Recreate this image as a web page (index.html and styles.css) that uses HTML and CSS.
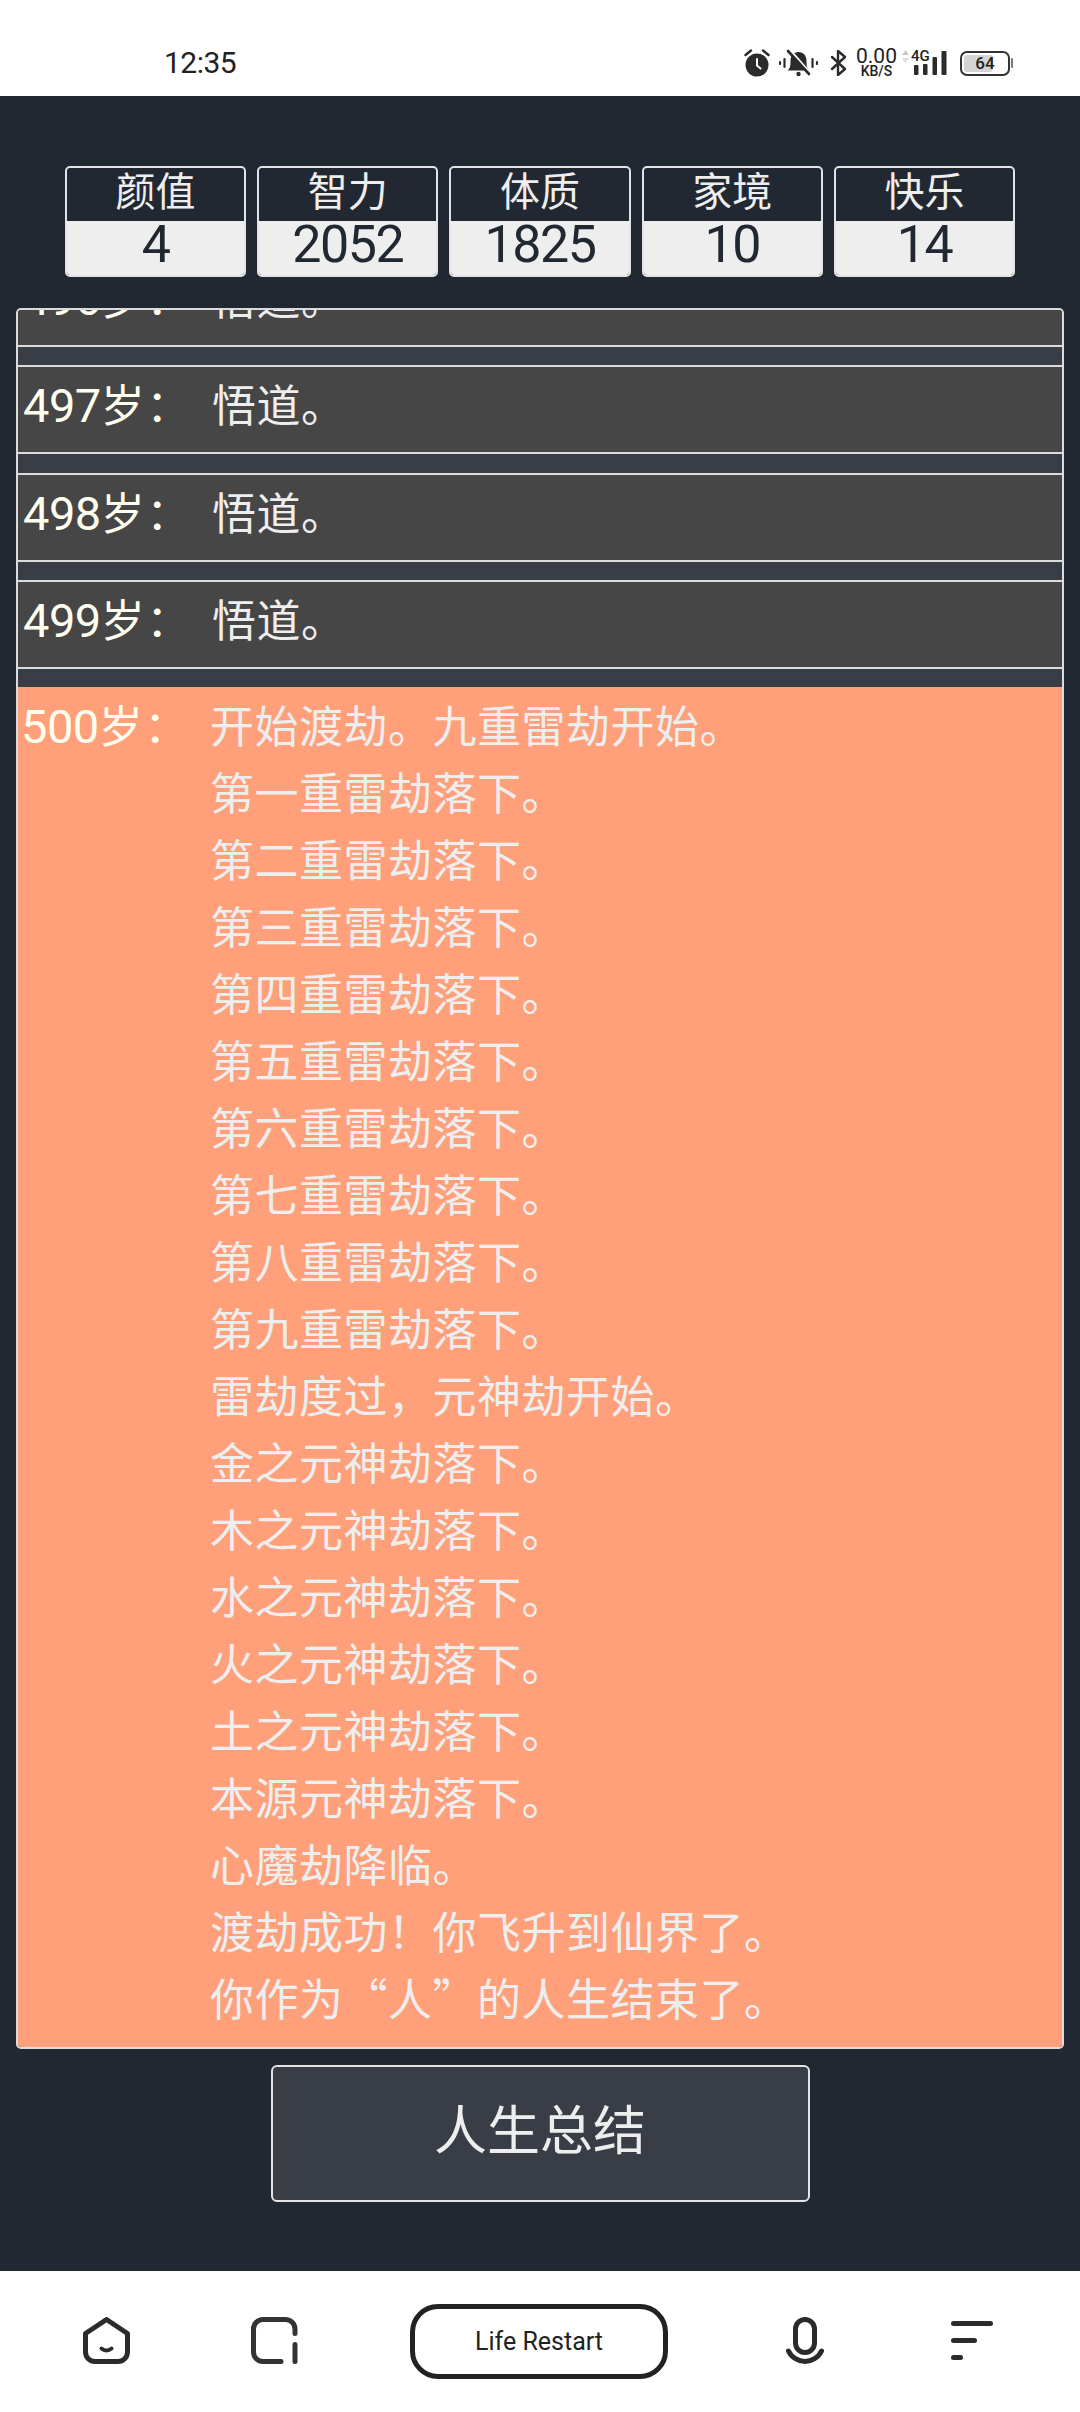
FILE: index.html
```html
<!DOCTYPE html>
<html lang="zh-CN">
<head>
    <meta charset="UTF-8">
    <meta name="viewport" content="width=device-width, initial-scale=1.0">
    <title>Life Restart</title>
    <link rel="stylesheet" href="styles.css">
</head>
<body>
    <header class="status-bar">
        <span class="clock">12:35</span>
        <div class="status-icons">
            <svg class="icon-alarm" width="26" height="28" viewBox="0 0 26 28">
                <circle cx="13" cy="16" r="11.5" fill="#2b2b2b"/>
                <path d="M13 10v6.5l3.5 3" fill="none" stroke="#fff" stroke-width="2" stroke-linecap="round"/>
                <path d="M1.5 6L7 1.5M24.5 6L19 1.5" fill="none" stroke="#2b2b2b" stroke-width="2.4" stroke-linecap="round"/>
            </svg>
            <svg class="icon-bell" width="39" height="28" viewBox="0 0 39 28">
                <path d="M8.500 21.500c2.500-2 3-4 3-9.500 0-5.500 3-9 8-9s8 3.500 8 9c0 5.500 .5 7.500 3 9.500z" fill="#2b2b2b"/>
                <circle cx="19.500" cy="25" r="2.200" fill="#2b2b2b"/>
                <path d="M11.500 2l20 23" stroke="#fff" stroke-width="3"/>
                <path d="M9 2l21 23" stroke="#2b2b2b" stroke-width="2.600" stroke-linecap="round"/>
                <path d="M1 13v2M5.500 10v8M33.500 10v8M38 13v2" stroke="#2b2b2b" stroke-width="2.200" stroke-linecap="round"/>
            </svg>
            <svg class="icon-bt" width="17" height="26" viewBox="0 0 17 26">
                <path d="M2 7l13 12-7 6V1l7 6L2 19" fill="none" stroke="#2b2b2b" stroke-width="2.400" stroke-linejoin="round" stroke-linecap="round"/>
            </svg>
            <div class="net-speed">
                <span class="net-num">0.00</span>
                <span class="net-unit">KB/S</span>
            </div>
            <svg class="icon-arrows" width="7" height="13" viewBox="0 0 7 13">
                <path d="M3.500 0L7 5H0z" fill="#c9c9c9"/>
                <path d="M3.500 13L7 8H0z" fill="#dedede"/>
            </svg>
            <div class="signal">
                <span class="signal-tag">4G</span>
                <svg width="34" height="25" viewBox="0 0 34 25">
                    <rect x="1" y="14" width="4.500" height="10" rx="1" fill="#2b2b2b"/>
                    <rect x="10" y="13" width="4.500" height="11" rx="1" fill="#2b2b2b"/>
                    <rect x="19.500" y="6" width="4.500" height="18" rx="1" fill="#2b2b2b"/>
                    <rect x="28.500" y="0" width="5" height="24" rx="1" fill="#2b2b2b"/>
                </svg>
            </div>
            <div class="battery">
                <div class="battery-shell"><span class="battery-fill" style="width: 64%"></span><span class="battery-num">64</span></div>
                <span class="battery-nub"></span>
            </div>
        </div>
    </header>

    <main class="app">
        <div class="stats">
            <div class="stat"><div class="stat-name">颜值</div><div class="stat-value">4</div></div>
            <div class="stat"><div class="stat-name">智力</div><div class="stat-value">2052</div></div>
            <div class="stat"><div class="stat-name">体质</div><div class="stat-value">1825</div></div>
            <div class="stat"><div class="stat-name">家境</div><div class="stat-value">10</div></div>
            <div class="stat"><div class="stat-name">快乐</div><div class="stat-value">14</div></div>
        </div>

        <ul class="trajectory">
            <li class="year year-clipped"><span class="age"><b class="age-num">496</b>岁<i class="colon">：</i></span><div class="events"><p>悟道。</p></div></li>
            <li class="year"><span class="age"><b class="age-num">497</b>岁<i class="colon">：</i></span><div class="events"><p>悟道。</p></div></li>
            <li class="year"><span class="age"><b class="age-num">498</b>岁<i class="colon">：</i></span><div class="events"><p>悟道。</p></div></li>
            <li class="year"><span class="age"><b class="age-num">499</b>岁<i class="colon">：</i></span><div class="events"><p>悟道。</p></div></li>
            <li class="year year-final">
                <span class="age"><b class="age-num">500</b>岁<i class="colon">：</i></span>
                <div class="events">
                    <p>开始渡劫。九重雷劫开始。</p>
                    <p>第一重雷劫落下。</p>
                    <p>第二重雷劫落下。</p>
                    <p>第三重雷劫落下。</p>
                    <p>第四重雷劫落下。</p>
                    <p>第五重雷劫落下。</p>
                    <p>第六重雷劫落下。</p>
                    <p>第七重雷劫落下。</p>
                    <p>第八重雷劫落下。</p>
                    <p>第九重雷劫落下。</p>
                    <p>雷劫度过，元神劫开始。</p>
                    <p>金之元神劫落下。</p>
                    <p>木之元神劫落下。</p>
                    <p>水之元神劫落下。</p>
                    <p>火之元神劫落下。</p>
                    <p>土之元神劫落下。</p>
                    <p>本源元神劫落下。</p>
                    <p>心魔劫降临。</p>
                    <p>渡劫成功！你飞升到仙界了。</p>
                    <p>你作为“人”的人生结束了。</p>
                </div>
            </li>
        </ul>

        <button class="summary-btn" type="button">人生总结</button>
    </main>

    <nav class="nav-bar">
        <a class="nav-item nav-home" href="#">
            <svg width="47" height="47" viewBox="0 0 47 47" fill="none" stroke="#2b2b2b" stroke-width="5" stroke-linecap="round" stroke-linejoin="round">
                <path d="M23.500 2.500L44.500 16.500V35a9.500 9.500 0 0 1-9.500 9.500H12A9.500 9.500 0 0 1 2.500 35V16.500z"/>
                <path d="M18.500 31.500c3 2.500 7 2.500 10 0" stroke-width="4"/>
            </svg>
        </a>
        <a class="nav-item nav-tabs" href="#">
            <svg width="47" height="47" viewBox="0 0 47 47" fill="none" stroke="#333" stroke-width="5" stroke-linecap="round" stroke-linejoin="round">
                <path d="M44 16.500V12a9.500 9.500 0 0 0-9.500-9.500H12A9.500 9.500 0 0 0 2.500 12v23a9.500 9.500 0 0 0 9.500 9.500h18"/>
                <path d="M44 27.500v17"/>
            </svg>
        </a>
        <a class="nav-item nav-brand" href="#"><span class="brand-pill">Life Restart</span></a>
        <a class="nav-item nav-mic" href="#">
            <svg width="38" height="47" viewBox="0 0 38 47" fill="none" stroke="#2b2b2b" stroke-width="5" stroke-linecap="round">
                <rect x="9.500" y="2.500" width="19" height="33" rx="9.500"/>
                <path d="M2.500 34c3 6.500 10 10.500 16.500 10.500s13.500-4 16.500-10.500"/>
            </svg>
        </a>
        <a class="nav-item nav-menu" href="#">
            <span class="menu-line menu-long"></span>
            <span class="menu-line menu-mid"></span>
            <span class="menu-line menu-short"></span>
        </a>
    </nav>
</body>
</html>
```

FILE: styles.css
```css
* {
    box-sizing: border-box;
}
html, body {
    margin: 0;
    padding: 0;
}
body {
    width: 1080px;
    height: 2412px;
    display: flex;
    flex-direction: column;
    overflow: hidden;
    background-color: #fff;
    font-family: Roboto, "Noto Sans CJK SC", sans-serif;
    color: #eee;
}

/* status bar */
.status-bar {
    height: 96px;
    flex: none;
    display: flex;
    align-items: center;
    justify-content: space-between;
    padding: 0 67px 0 164px;
    background-color: #fff;
    color: #222;
}
.clock {
    font-size: 30px;
    font-weight: 400;
    letter-spacing: -0.5px;
    margin-top: 30px;
    line-height: 34px;
}
.status-icons {
    display: flex;
    align-items: center;
    margin-top: 30px;
    height: 34px;
}
.icon-bell {
    margin-left: 9px;
}
.icon-bt {
    margin-left: 12px;
}
.net-speed {
    margin-left: 9px;
    width: 41px;
    display: flex;
    flex-direction: column;
    align-items: center;
    line-height: 1;
}
.net-num {
    font-size: 21px;
    line-height: 17px;
}
.net-unit {
    font-size: 14px;
    font-weight: 500;
    line-height: 13px;
}
.icon-arrows {
    margin-left: 5px;
    margin-bottom: 14px;
}
.signal {
    position: relative;
    margin-left: 2px;
    width: 36px;
    height: 25px;
    display: flex;
    justify-content: flex-end;
}
.signal-tag {
    position: absolute;
    left: 0;
    top: -3px;
    font-size: 15px;
    font-weight: 500;
    line-height: 16px;
    background-color: #fff;
    padding-right: 1px;
}
.battery {
    margin-left: 13px;
    display: flex;
    align-items: center;
    gap: 1px;
}
.battery-shell {
    position: relative;
    width: 50px;
    height: 25px;
    border: 2px solid #333;
    border-radius: 7px;
    padding: 2px;
    display: flex;
    align-items: center;
    justify-content: center;
    overflow: hidden;
}
.battery-fill {
    position: absolute;
    left: 2px;
    top: 2px;
    bottom: 2px;
    background-color: #d4d4d4;
    border-radius: 3px;
}
.battery-num {
    position: relative;
    font-size: 17px;
    font-weight: 500;
    line-height: 18px;
}
.battery-nub {
    width: 2px;
    height: 10px;
    background-color: #777;
    border-radius: 1px;
}

/* game area */
.app {
    flex: 1;
    min-height: 0;
    display: flex;
    flex-direction: column;
    align-items: center;
    padding: 70px 16px 0;
    background-color: #222831;
}
.stats {
    display: flex;
    gap: 11px;
    width: 950px;
    height: 111px;
    flex: none;
}
.stat {
    flex: 1;
    display: flex;
    flex-direction: column;
    border: 2px solid #e4e4e4;
    border-radius: 5px;
    overflow: hidden;
}
.stat-name {
    height: 53px;
    flex: none;
    font-size: 40px;
    line-height: 50px;
    text-align: center;
}
.stat-value {
    flex: 1;
    background-color: #eee;
    color: #222831;
    font-size: 52px;
    letter-spacing: -1.5px;
    line-height: 48px;
    text-align: center;
}

/* trajectory list */
.trajectory {
    list-style: none;
    margin: 31px 0 0;
    padding: 0;
    width: 1048px;
    height: 1741px;
    flex: none;
    display: flex;
    flex-direction: column;
    gap: 18.300px;
    overflow: hidden;
    background-color: #393e46;
    border: 2px solid #dcdcdc;
    border-radius: 5px;
}
.year {
    flex: none;
    display: flex;
    height: 89px;
    margin: 0 -2px;
    padding: 3px 0 0 5px;
    background-color: #464646;
    border: 2px solid #dcdcdc;
    font-size: 44px;
    line-height: 67px;
    letter-spacing: 0.5px;
}
.year-clipped {
    margin-top: -52px;
}
.year-final {
    flex: 1;
    height: auto;
    padding-top: 4px;
    background-color: #ffa07a;
    border: none;
}
.age {
    flex: none;
    width: 189px;
    height: 67px;
    color: #fffff0;
}
.age-num {
    font-size: 47px;
    font-weight: 400;
    letter-spacing: -0.5px;
}
.colon {
    font-style: normal;
    font-family: "Noto Sans CJK TC", sans-serif;
    margin-left: 1px;
}
.events {
    font-family: "Noto Sans CJK SC", sans-serif;
}
.events p {
    margin: 0;
    height: 67px;
}

.summary-btn {
    margin-top: 16px;
    width: 539px;
    height: 137px;
    flex: none;
    background-color: #393e46;
    color: #eee;
    border: 2px solid #e4e4e4;
    border-radius: 6px;
    font-family: "Noto Sans CJK SC", sans-serif;
    font-size: 53px;
    font-weight: 400;
    padding: 0 0 13px;
}

/* bottom navigation */
.nav-bar {
    height: 141px;
    flex: none;
    display: grid;
    grid-template-columns: 212px 124px 406px 126px 208px;
    padding-top: 33px;
    background-color: #fff;
}
.nav-item {
    display: flex;
    justify-content: center;
    align-items: flex-start;
    padding-top: 13px;
    text-decoration: none;
    color: #222;
}
.nav-brand {
    padding-top: 0;
}
.brand-pill {
    width: 258px;
    height: 75px;
    display: flex;
    align-items: center;
    justify-content: center;
    border: 5px solid #222;
    border-radius: 28px;
    font-size: 25px;
    font-weight: 400;
}
.nav-menu {
    flex-direction: column;
    justify-content: flex-start;
    align-items: flex-start;
    gap: 12px;
    padding: 17px 0 0 83px;
}
.menu-line {
    display: block;
    height: 5px;
    border-radius: 3px;
    background-color: #2b2b2b;
}
.menu-long {
    width: 42px;
}
.menu-mid {
    width: 26px;
}
.menu-short {
    width: 12px;
}
```
